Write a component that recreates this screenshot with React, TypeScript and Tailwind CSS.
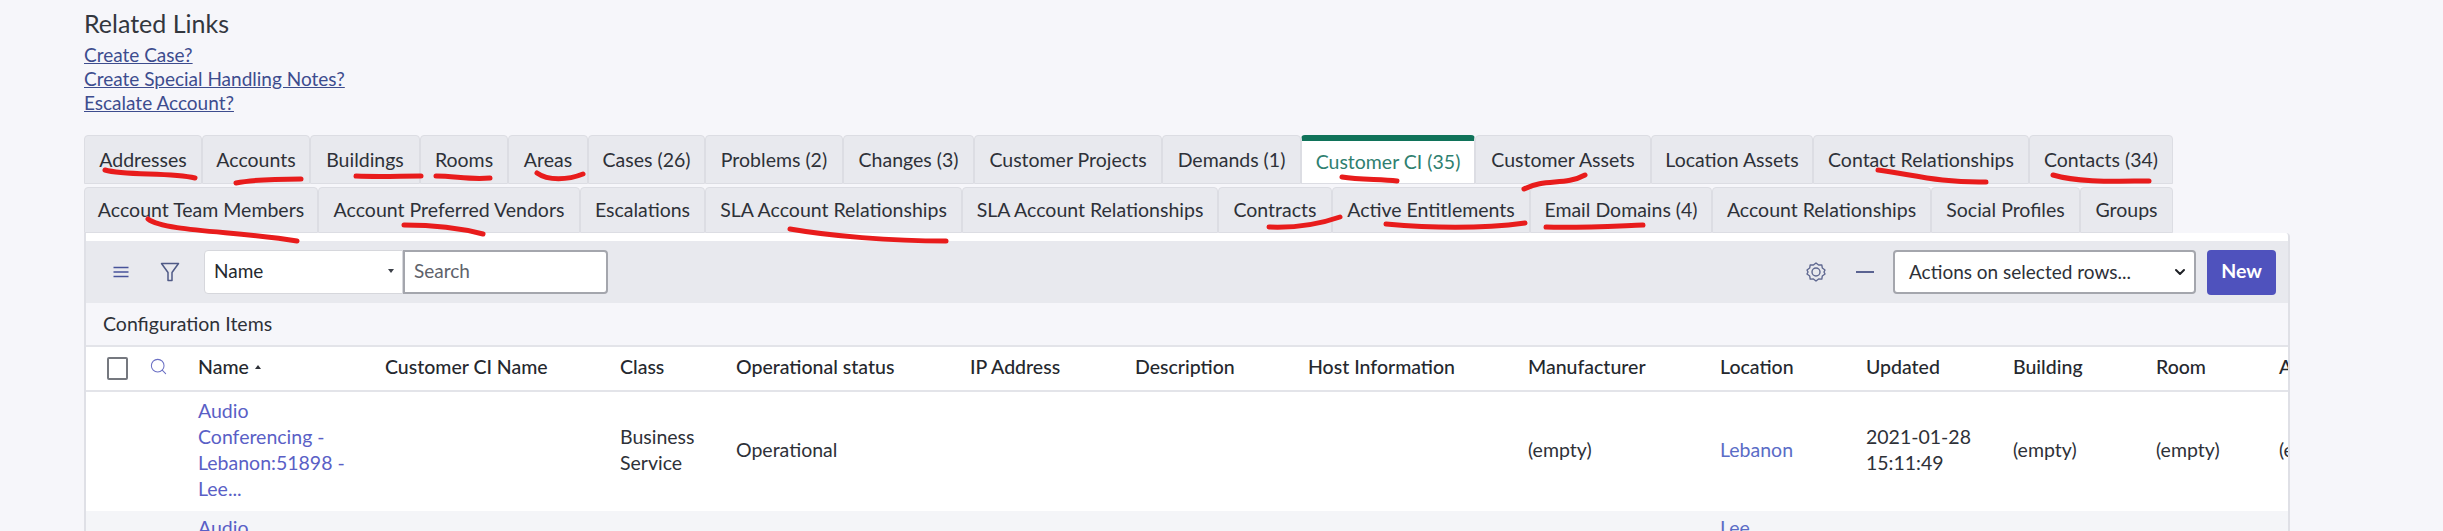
import React from "react";
import { ChevronDown, Search } from "lucide-react";

const row1: [string, string, boolean?][] = [
  ["Addresses", "w-[118px]"],
  ["Accounts", "w-[108px]"],
  ["Buildings", "w-[110px]"],
  ["Rooms", "w-[88px]"],
  ["Areas", "w-[80px]"],
  ["Cases (26)", "w-[117px]"],
  ["Problems (2)", "w-[138px]"],
  ["Changes (3)", "w-[131px]"],
  ["Customer Projects", "w-[188px]"],
  ["Demands (1)", "w-[139px]"],
  ["Customer CI (35)", "w-[174px]", true],
  ["Customer Assets", "w-[176px]"],
  ["Location Assets", "w-[162px]"],
  ["Contact Relationships", "w-[216px]"],
  ["Contacts (34)", "w-[144px]"],
];
const row2: [string, string][] = [
  ["Account Team Members", "w-[234px]"],
  ["Account Preferred Vendors", "w-[262px]"],
  ["Escalations", "w-[125px]"],
  ["SLA Account Relationships", "w-[257px]"],
  ["SLA Account Relationships", "w-[256px]"],
  ["Contracts", "w-[114px]"],
  ["Active Entitlements", "w-[198px]"],
  ["Email Domains (4)", "w-[182px]"],
  ["Account Relationships", "w-[219px]"],
  ["Social Profiles", "w-[149px]"],
  ["Groups", "w-[93px]"],
];

const columns: [string, string][] = [
  ["Customer CI Name", "w-[235px]"],
  ["Class", "w-[116px]"],
  ["Operational status", "w-[234px]"],
  ["IP Address", "w-[165px]"],
  ["Description", "w-[173px]"],
  ["Host Information", "w-[220px]"],
  ["Manufacturer", "w-[192px]"],
  ["Location", "w-[146px]"],
  ["Updated", "w-[147px]"],
  ["Building", "w-[143px]"],
  ["Room", "w-[123px]"],
  ["Assigned", "w-[100px]"],
];

const strokes = [
  "M105 170 C125 176 170 172 195 178",
  "M236 183 C255 179 280 179 301 179",
  "M356 176 C380 177 400 176 421 176",
  "M436 176 C455 176 470 180 490 178",
  "M537 173 C548 181 568 180 583 174",
  "M148 219 C165 232 240 231 297 241",
  "M404 225 C430 225 460 228 483 234",
  "M790 229 C830 236 890 241 946 241",
  "M1342 177 C1360 180 1380 179 1397 181",
  "M1524 189 C1545 178 1565 186 1585 175",
  "M1269 227 C1295 228 1320 224 1340 217",
  "M1386 224 C1430 228 1480 229 1525 223",
  "M1546 227 C1580 228 1615 226 1643 225",
  "M1878 170 C1910 174 1940 183 1986 182",
  "M2053 175 C2080 183 2120 181 2149 181",
];

function Tab({ label, width, active }: { label: string; width: string; active?: boolean }) {
  return (
    <div
      className={`${width} h-full flex items-center justify-center rounded-t-[4px] border border-[#dcdde3] whitespace-nowrap ${
        active
          ? "bg-white border-t-[6px] border-t-[#10735a] text-[#2f7f70]"
          : "bg-[#e8e9ee] text-[#2e3138]"
      }`}
    >
      {label}
    </div>
  );
}

export default function App() {
  return (
    <div className="relative h-[531px] w-[2443px] overflow-hidden bg-[#f6f6fa] pl-[84px] pt-[10px] font-['Lato',sans-serif] text-[19.5px] text-[#2e3138]">
      <div className="text-[25px] leading-[26px] text-[#33373e]">Related Links</div>
      <div className="mt-[7px] flex flex-col items-start text-[19px] leading-[24px] text-[#3d4c8e]">
        <a className="underline">Create Case?</a>
        <a className="underline">Create Special Handling Notes?</a>
        <a className="underline">Escalate Account?</a>
      </div>

      <div className="mt-[20px] flex h-[49px] w-[2089px]">
        {row1.map(([l, w, a]) => (
          <Tab key={l} label={l} width={w} active={a} />
        ))}
      </div>
      <div className="mt-[3px] flex h-[46px] w-[2089px]">
        {row2.map(([l, w], i) => (
          <Tab key={i} label={l} width={w} />
        ))}
      </div>

      <div className="h-[400px] w-[2206px] overflow-hidden rounded-tr-[4px] border-r-2 border-l-2 border-[#dfe0e6] bg-white pt-[8px]">
        <div className="flex h-[62px] items-center bg-[#e8e9ee] pr-[12px]">
          <svg className="ml-[27px] h-[16px] w-[16px]" viewBox="0 0 16 16" fill="none" stroke="#47539a" strokeWidth="1.7">
            <path d="M0.5 3.5H15.5M0.5 8H15.5M0.5 12.5H15.5" />
          </svg>
          <svg className="ml-[31px] h-[20px] w-[20px]" viewBox="0 0 20 20" fill="none" stroke="#4f5a86" strokeWidth="1.5">
            <path d="M1.5 1.5H18.5L12 10.5V18.5H8V10.5Z" strokeLinejoin="round" />
          </svg>
          <div className="ml-[24px] flex h-[44px] w-[199px] items-center justify-between rounded-l-[4px] border border-[#d6d7dc] bg-white pr-[8px] pb-[2px] pl-[9px] text-[19px] text-[#25282e]">
            <span>Name</span>
            <span className="h-0 w-0 border-x-[3.5px] border-t-[4px] border-x-transparent border-t-[#3c4048]" />
          </div>
          <div className="flex h-[44px] w-[205px] items-center rounded-r-[4px] border-2 border-[#a4a6ad] bg-white pb-[2px] pl-[9px] text-[19px] text-[#5e626b]">
            Search
          </div>
          <div className="flex-1" />
          <svg className="h-[20px] w-[20px]" viewBox="0 0 20 20" fill="none" stroke="#5f6890" strokeWidth="1.4">
            <path
              d="M10 1 L12.6 3 L15.8 2.9 L16.3 6 L19 8 L18 10 L19 12 L16.3 14 L15.8 17.1 L12.6 17 L10 19 L7.4 17 L4.2 17.1 L3.7 14 L1 12 L2 10 L1 8 L3.7 6 L4.2 2.9 L7.4 3 Z"
              strokeLinejoin="round"
            />
            <circle cx="10" cy="10" r="4" />
          </svg>
          <div className="ml-[30px] h-[2px] w-[18px] bg-[#5a6391]" />
          <div className="ml-[19px] flex h-[44px] w-[303px] items-center justify-between rounded-[4px] border-2 border-[#a4a6ad] bg-white pr-[6px] pl-[14px] text-[19px] text-[#2e3138]">
            <span>Actions on selected rows...</span>
            <ChevronDown size={16} strokeWidth={3} className="text-[#1f2126]" />
          </div>
          <div className="ml-[11px] flex h-[45px] w-[69px] items-center justify-center rounded-[4px] bg-[#4f52bd] pb-[2px] font-bold text-white">
            New
          </div>
        </div>

        <div className="flex h-[42px] items-center bg-[#f6f6fa] pl-[17px]">Configuration Items</div>

        <table className="w-[2293px] table-fixed border-collapse text-left">
          <thead>
            <tr className="h-[45px] border-y-2 border-[#e3e4e9] bg-white text-[#25282e]">
              <th className="w-[112px] p-0 font-normal">
                <div className="flex items-center">
                  <div className="ml-[21px] h-[23px] w-[21px] rounded-[2px] border-2 border-[#75787f] bg-white" />
                  <Search size={19} strokeWidth={1.3} className="mt-[-5px] ml-[21px] text-[#6a6fc4]" />
                </div>
              </th>
              <th className="w-[187px] p-0 pb-[3px] font-medium">
                <span className="flex items-center gap-[6px]">
                  Name
                  <span className="h-0 w-0 border-x-[3.5px] border-b-[4px] border-x-transparent border-b-[#2e3138]" />
                </span>
              </th>
              {columns.map(([c, w]) => (
                <th key={c} className={`${w} p-0 pb-[3px] font-medium whitespace-nowrap`}>
                  {c}
                </th>
              ))}
            </tr>
          </thead>
          <tbody className="leading-[26px]">
            <tr className="h-[120px] bg-white">
              <td />
              <td className="pr-[30px] pb-[3px] text-[#5a5fc6]">Audio Conferencing - Lebanon:51898 - Lee...</td>
              <td />
              <td className="pr-[20px] pb-[3px]">Business Service</td>
              <td className="pb-[3px]">Operational</td>
              <td />
              <td />
              <td />
              <td className="pb-[3px]">(empty)</td>
              <td className="pb-[3px] text-[#5a6cc6]">Lebanon</td>
              <td className="pr-[30px] pb-[3px]">2021-01-28 15:11:49</td>
              <td className="pb-[3px]">(empty)</td>
              <td className="pb-[3px]">(empty)</td>
              <td className="pb-[3px] whitespace-nowrap">(empty)</td>
            </tr>
            <tr className="h-[120px] bg-[#f4f5f8] align-top">
              <td />
              <td className="pt-[4px] text-[#5a5fc6]">Audio</td>
              <td colSpan={7} />
              <td className="pt-[4px] text-[#5a6cc6]">Lee</td>
              <td colSpan={4} />
            </tr>
          </tbody>
        </table>
      </div>

      <svg className="pointer-events-none absolute top-0 left-0 h-[531px] w-[2443px]" viewBox="0 0 2443 531" fill="none" stroke="#e81c1c" strokeWidth="5" strokeLinecap="round">
        {strokes.map((d, i) => (
          <path key={i} d={d} />
        ))}
      </svg>
    </div>
  );
}
